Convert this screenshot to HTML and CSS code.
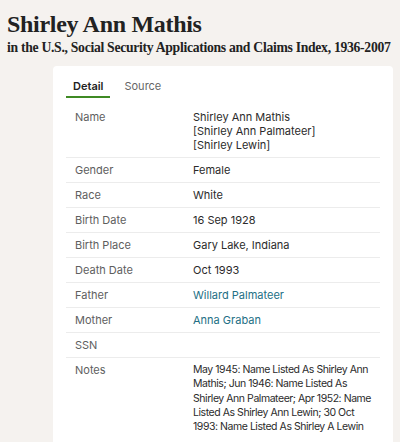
FILE: index.html
```html
<!DOCTYPE html>
<html>
	<head>
		<meta charset="utf-8" />
		<title>Shirley Ann Mathis</title>
		<link rel="stylesheet" href="styles.css">
	</head>
	<body>
		<div class="header">
			<h1 class="title">Shirley Ann Mathis</h1>
			<h2 class="subtitle">in the U.S., Social Security Applications and Claims Index, 1936-2007</h2>
		</div>

		<div class="card">
			<ul class="tabs">
				<li class="active">Detail</li>
				<li>Source</li>
			</ul>

			<table class="facts">
				<tr>
					<th>Name</th>
					<td>Shirley Ann Mathis<br>[Shirley Ann Palmateer]<br>[Shirley Lewin]</td>
				</tr>
				<tr>
					<th>Gender</th>
					<td>Female</td>
				</tr>
				<tr>
					<th>Race</th>
					<td>White</td>
				</tr>
				<tr>
					<th>Birth Date</th>
					<td>16 Sep 1928</td>
				</tr>
				<tr>
					<th>Birth Place</th>
					<td>Gary Lake, Indiana</td>
				</tr>
				<tr>
					<th>Death Date</th>
					<td>Oct 1993</td>
				</tr>
				<tr>
					<th>Father</th>
					<td><a href="#">Willard Palmateer</a></td>
				</tr>
				<tr>
					<th>Mother</th>
					<td><a href="#">Anna Graban</a></td>
				</tr>
				<tr>
					<th>SSN</th>
					<td></td>
				</tr>
				<tr>
					<th>Notes</th>
					<td class="notes">May 1945: Name Listed As Shirley Ann<br>Mathis; Jun 1946: Name Listed As<br>Shirley Ann Palmateer; Apr 1952: Name<br>Listed As Shirley Ann Lewin; 30 Oct<br>1993: Name Listed As Shirley A Lewin</td>
				</tr>
			</table>
		</div>
	</body>
</html>
```

FILE: styles.css
```css
* {
	margin: 0;
	padding: 0;
}

body {
	background-color: #f5f2ef;
	font-family: Inter, "Noto Sans", sans-serif;
	font-size: 11px;
	color: #2b2b2b;
	padding: 10px 7px 0;
}

.header {
	font-family: "Liberation Serif", "DejaVu Serif", serif;
	color: #222;
}

.title {
	font-size: 24px;
	line-height: 28px;
	font-weight: bold;
	letter-spacing: -0.3px;
}

.subtitle {
	font-size: 13.7px;
	line-height: 17px;
	font-weight: bold;
	letter-spacing: -0.3px;
	white-space: nowrap;
	margin-top: 1px;
}

.card {
	background-color: #fff;
	border-radius: 4px;
	margin: 10px 0 0 46px;
	width: 340px;
	padding: 10px 13px 20px;
	box-sizing: border-box;
	min-height: 380px;
}

.tabs {
	list-style: none;
	display: flex;
	gap: 7px;
	margin-bottom: 7px;
}

.tabs li {
	padding: 0 7px;
	line-height: 20px;
	color: #666;
	border-bottom: 2px solid transparent;
}

.tabs li.active {
	color: #222;
	font-weight: 600;
	border-bottom-color: #3f8a24;
}

.facts {
	width: 100%;
	border-collapse: collapse;
	table-layout: fixed;
}

.facts tr {
	border-bottom: 1px solid #ececec;
}

.facts tr:last-child {
	border-bottom: none;
}

.facts th {
	width: 118px;
	padding: 5px 0 5px 9px;
	text-align: left;
	vertical-align: top;
	font-weight: normal;
	color: #5e5e5e;
	line-height: 14px;
}

.facts td {
	padding: 5px 8px 5px 0;
	vertical-align: top;
	line-height: 14px;
	height: 14px;
}

.facts td.notes {
	white-space: nowrap;
	font-size: 10.5px;
	letter-spacing: -0.45px;
	line-height: 14.3px;
}

.facts a {
	color: #236f85;
	text-decoration: none;
}
```
